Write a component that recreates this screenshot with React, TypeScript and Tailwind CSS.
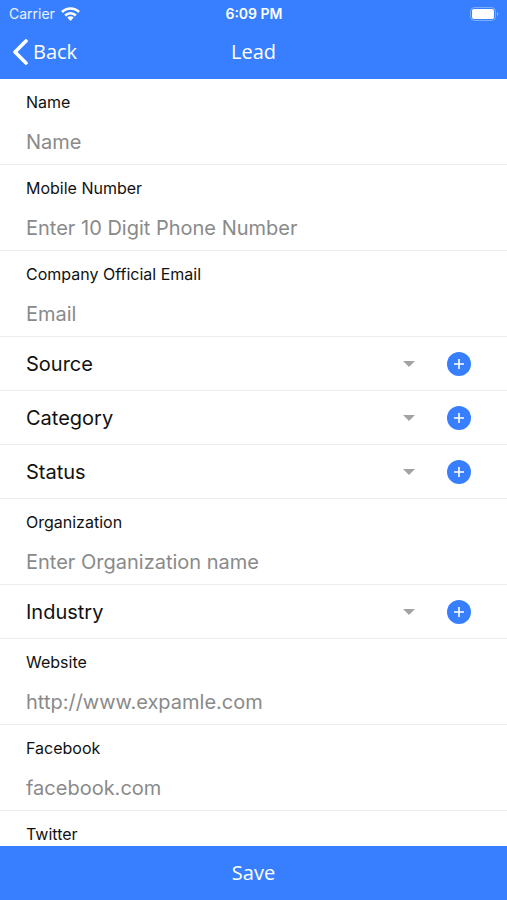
import React from 'react';

type Field = {
  id: string;
  label: string;
  kind: 'text' | 'select';
  type?: string;
  placeholder?: string;
};

const fields: Field[] = [
  { id: 'name', label: 'Name', kind: 'text', placeholder: 'Name' },
  { id: 'mobile', label: 'Mobile Number', kind: 'text', type: 'tel', placeholder: 'Enter 10 Digit Phone Number' },
  { id: 'email', label: 'Company Official Email', kind: 'text', type: 'email', placeholder: 'Email' },
  { id: 'source', label: 'Source', kind: 'select' },
  { id: 'category', label: 'Category', kind: 'select' },
  { id: 'status', label: 'Status', kind: 'select' },
  { id: 'organization', label: 'Organization', kind: 'text', placeholder: 'Enter Organization name' },
  { id: 'industry', label: 'Industry', kind: 'select' },
  { id: 'website', label: 'Website', kind: 'text', type: 'url', placeholder: 'http://www.expamle.com' },
  { id: 'facebook', label: 'Facebook', kind: 'text', placeholder: 'facebook.com' },
  { id: 'twitter', label: 'Twitter', kind: 'text', placeholder: 'twitter.com' },
];

function StatusBar() {
  return (
    <div className="grid h-7 grid-cols-3 items-center pl-[9px] pr-2 font-['Inter',sans-serif] text-sm">
      <div className="flex items-center gap-1.5">
        <span className="text-white/90">Carrier</span>
        <svg width="19" height="14" viewBox="0 0 19 14" fill="none" stroke="currentColor" strokeWidth="2.6" aria-hidden="true">
          <path d="M1 5a12 12 0 0 1 17 0" />
          <path d="M4.2 8.5a7.5 7.5 0 0 1 10.6 0" />
          <path d="M9.5 14 6.3 10.6a4.6 4.6 0 0 1 6.4 0Z" fill="currentColor" stroke="none" />
        </svg>
      </div>
      <span className="text-center font-semibold">6:09 PM</span>
      <svg className="justify-self-end" width="29" height="14" viewBox="0 0 29 14" aria-hidden="true">
        <rect x="0.5" y="0.5" width="25" height="13" rx="4" fill="none" stroke="#fff" strokeOpacity="0.35" />
        <rect x="2" y="2" width="22" height="10" rx="2" fill="#fff" />
        <path d="M27 4.8c1.8.8 1.8 3.6 0 4.4Z" fill="#fff" fillOpacity="0.4" />
      </svg>
    </div>
  );
}

function TextField({ field }: { field: Field }) {
  return (
    <div className="flex h-[86px] shrink-0 flex-col border-b border-[#ececec] px-[26px] pt-[11px]">
      <label htmlFor={field.id} className="text-base leading-6">
        {field.label}
      </label>
      <input
        id={field.id}
        type={field.type || 'text'}
        placeholder={field.placeholder}
        className="mt-2.5 h-9 w-full bg-transparent text-xl outline-none placeholder:text-[#8a8a8a]"
      />
    </div>
  );
}

function SelectField({ field }: { field: Field }) {
  return (
    <div className="flex h-[54px] shrink-0 items-center border-b border-[#ececec] pr-9">
      <div className="relative h-full flex-1">
        <select
          id={field.id}
          aria-label={field.label}
          className="h-full w-full appearance-none bg-transparent pl-[26px] text-xl outline-none"
        >
          <option>{field.label}</option>
        </select>
        <svg
          className="pointer-events-none absolute right-0 top-1/2 -translate-y-1/2"
          width="12"
          height="6"
          viewBox="0 0 12 6"
          aria-hidden="true"
        >
          <path d="M0 0h12L6 6Z" fill="#a3a3a3" />
        </svg>
      </div>
      <button
        type="button"
        aria-label={`Add ${field.label}`}
        className="ml-8 flex h-6 w-6 items-center justify-center rounded-full bg-[#387fff] text-white"
      >
        <svg width="12" height="12" viewBox="0 0 12 12" stroke="currentColor" strokeWidth="1.6" aria-hidden="true">
          <path d="M6 1v10M1 6h10" />
        </svg>
      </button>
    </div>
  );
}

export default function App() {
  return (
    <div className="flex h-dvh flex-col bg-white font-['Inter',sans-serif] text-[#111]">
      <header className="shrink-0 bg-[#387fff] text-white">
        <StatusBar />
        <div className="grid h-[51px] grid-cols-3 items-center px-3 pb-1 font-['Open_Sans',sans-serif] text-xl">
          <button type="button" className="flex items-center gap-1 justify-self-start">
            <svg width="17" height="26" viewBox="0 0 17 26" fill="none" stroke="currentColor" strokeWidth="3.6" strokeLinecap="round" strokeLinejoin="round" aria-hidden="true">
              <path d="M14 2 3 13l11 11" />
            </svg>
            Back
          </button>
          <h1 className="text-center">Lead</h1>
        </div>
      </header>

      <form className="flex min-h-0 flex-1 flex-col">
        <div className="flex min-h-0 flex-1 flex-col overflow-y-auto [scrollbar-width:none]">
          {fields.map((field) =>
            field.kind === 'select' ? (
              <SelectField key={field.id} field={field} />
            ) : (
              <TextField key={field.id} field={field} />
            )
          )}
        </div>
        <button type="submit" className="h-[54px] shrink-0 bg-[#387fff] font-['Open_Sans',sans-serif] text-xl text-white">
          Save
        </button>
      </form>
    </div>
  );
}
